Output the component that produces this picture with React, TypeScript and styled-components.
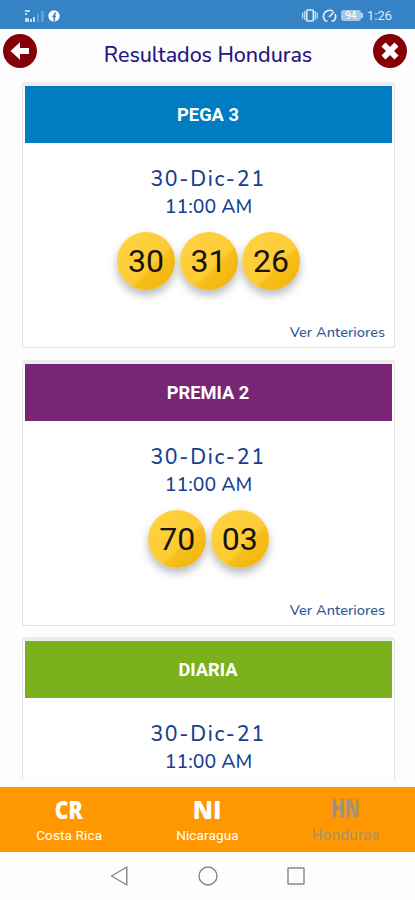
import React from 'react';
import styled, { createGlobalStyle } from 'styled-components';

const GlobalStyle = createGlobalStyle`
  *, *::before, *::after { box-sizing: border-box; }
  body { margin: 0; background: #fdfdfd; }
`;

const Screen = styled.div`
  width: 415px;
  height: 900px;
  display: flex;
  flex-direction: column;
  overflow: hidden;
  background: #fdfdfd;
  font-family: Roboto, sans-serif;
`;

const StatusBar = styled.div`
  height: 29px;
  flex: none;
  display: flex;
  align-items: center;
  justify-content: space-between;
  padding: 2px 23px 0 25px;
  background: #3583c5;
  color: #dcebf8;
`;

const StatusGroup = styled.div<{ $gap: number }>`
  display: flex;
  align-items: center;
  gap: ${p => p.$gap}px;
`;

const Battery = styled.span`
  width: 20px;
  height: 11px;
  border-radius: 3px;
  background: #a5c8e6;
  color: #fff;
  font-size: 10px;
  line-height: 11px;
  text-align: center;
  position: relative;

  &::after {
    content: '';
    position: absolute;
    right: -2px;
    top: 3px;
    width: 2px;
    height: 5px;
    background: #b9d5ee;
  }
`;

const Clock = styled.span`
  margin-left: 2px;
  font-size: 13.5px;
  line-height: 15px;
  letter-spacing: -0.2px;
`;

const Header = styled.header`
  height: 53px;
  flex: none;
  display: flex;
  justify-content: space-between;
  padding: 5px 8px 0 3px;
`;

const Title = styled.h1`
  margin: 0;
  padding: 6px 0 0 6px;
  font: 500 21.5px/30px Nunito, 'Open Sans', sans-serif;
  letter-spacing: -0.06px;
  white-space: nowrap;
  color: #241582;
`;

const RoundButton = styled.button`
  width: 34px;
  height: 34px;
  padding: 0;
  border: 0;
  border-radius: 50%;
  background: #850006;
  display: block;

  svg { display: block; }
`;

const Results = styled.main`
  height: 698px;
  flex: none;
  padding: 0 20px 0 22px;
  display: flex;
  flex-direction: column;
  gap: 11.7px;
  overflow: hidden;
`;

const Card = styled.section`
  height: 266px;
  flex: none;
  border: 1.5px solid #e3e3e5;
  border-top: 4px solid #ececee;
  border-radius: 3px;
  padding: 0 2px;
  background: #fff;
  display: flex;
  flex-direction: column;
  align-items: center;
`;

const Banner = styled.h2<{ $color: string }>`
  align-self: stretch;
  height: 57px;
  flex: none;
  margin: 0;
  padding-right: 1px;
  background: ${p => p.$color};
  color: #fff;
  font: 700 18.3px/57px Roboto, sans-serif;
  text-align: center;
`;

const DateText = styled.div`
  margin: 22px 1px 0 0;
  font: 500 21.3px/28px Nunito, 'Open Sans', sans-serif;
  letter-spacing: 1.7px;
  color: #173f91;
`;

const TimeText = styled.div`
  font: 500 19.5px/28px Nunito, 'Open Sans', sans-serif;
  color: #173f91;
`;

const Balls = styled.div`
  display: flex;
  gap: 4.5px;
  margin-top: 11px;
`;

const Ball = styled.span`
  width: 58px;
  height: 58px;
  border-radius: 50%;
  background: linear-gradient(135deg, #ffd342 0%, #fdcb35 58%, #f7bf1d 62%, #efb000 100%);
  box-shadow: 0 5px 8px rgba(70, 70, 80, 0.38);
  color: #15130c;
  font-size: 32px;
  line-height: 59px;
  text-align: center;
`;

const PreviousLink = styled.a`
  align-self: flex-end;
  margin: 31px 7px 0 0;
  font: 500 14.6px/22px Nunito, 'Open Sans', sans-serif;
  color: #2c5797;
`;

const CountryBar = styled.nav`
  height: 65px;
  flex: none;
  margin-top: 7px;
  display: grid;
  grid-template-columns: repeat(3, 1fr);
  background: #ff9800;
`;

const CountryTab = styled.button<{ $active?: boolean }>`
  padding: ${p => (p.$active ? '3px' : '5px')} 0 0;
  border: 0;
  background: none;
  font-family: Roboto, sans-serif;
  color: ${p => (p.$active ? '#a39375' : '#fff')};
  display: flex;
  flex-direction: column;
  align-items: center;
  gap: ${p => (p.$active ? '2px' : '0')};
`;

const CountryCode = styled.span<{ $stretch: number }>`
  font: 800 25.5px/34px 'Open Sans', sans-serif;
  transform: scaleX(${p => p.$stretch});
`;

const CountryName = styled.span<{ $size: number; $spacing: number }>`
  font-size: ${p => p.$size}px;
  line-height: 18px;
  letter-spacing: ${p => p.$spacing}px;
`;

const SystemNav = styled.div`
  flex: 1;
  display: flex;
  align-items: center;
  justify-content: center;
  gap: 68px;

  svg { display: block; }
`;

const draws = [
  { name: 'PEGA 3', color: '#007dc2', numbers: ['30', '31', '26'] },
  { name: 'PREMIA 2', color: '#782575', numbers: ['70', '03'] },
  { name: 'DIARIA', color: '#7bb11c', numbers: [] },
];

const countries = [
  { code: 'CR', name: 'Costa Rica', stretch: 0.83, size: 13.6, spacing: 0.1 },
  { code: 'NI', name: 'Nicaragua', stretch: 0.95, size: 13.6, spacing: 0.1 },
  { code: 'HN', name: 'Honduras', stretch: 0.7, size: 14.8, spacing: 0.5, active: true },
];

const SignalIcon = () => (
  <svg width="20" height="14" viewBox="0 0 20 14" fill="currentColor">
    <path d="M0 1h5v2H0zM0 4h2v2H0zM0 9h4v4H0zM5 10h2v3H5zM8 8h2v5H8z" opacity=".85" />
    <path d="M12 5h2v8h-2zM16 2h3v11h-3z" opacity=".28" />
  </svg>
);

const SocialIcon = () => (
  <svg width="12" height="12" viewBox="0 0 12 12">
    <circle cx="6" cy="6" r="5.7" fill="#fff" />
    <path d="M6.3 11.5V4.7Q6.3 3 8.2 3M4.3 6.4h3.6" stroke="#3583c5" strokeWidth="1.6" fill="none" />
  </svg>
);

const VibrateIcon = () => (
  <svg width="16" height="13" viewBox="0 0 16 13" fill="none" stroke="currentColor" strokeWidth="1.6">
    <rect x="4.7" y="1" width="6.6" height="11" rx="1" />
    <path d="M.8 3.5v6M2.8 2v9M13.2 2v9M15.2 3.5v6" strokeWidth="1.1" />
  </svg>
);

const GaugeIcon = () => (
  <svg width="15" height="14" viewBox="0 0 15 14" fill="none" stroke="currentColor" strokeWidth="1.7">
    <path d="M4 12.2A6 6 0 1 1 11 2.4M13.1 5A6 6 0 0 1 11 12.2M3.5 12h2M9.5 12h2M7 8l5-5" />
  </svg>
);

const BackArrow = () => (
  <svg width="34" height="34" viewBox="0 0 34 34">
    <path d="M7.5 17 17 8.2V14h9v6h-9v5.8Z" fill="#fff" />
  </svg>
);

const CrossMark = () => (
  <svg width="34" height="34" viewBox="0 0 34 34">
    <path d="m10.5 10.5 13 13m0-13-13 13" stroke="#fff" strokeWidth="5.7" />
  </svg>
);

export default function App() {
  return (
    <>
      <GlobalStyle />
      <Screen>
        <StatusBar>
          <StatusGroup $gap={3}>
            <SignalIcon />
            <SocialIcon />
          </StatusGroup>
          <StatusGroup $gap={4}>
            <VibrateIcon />
            <GaugeIcon />
            <Battery>94</Battery>
            <Clock>1:26</Clock>
          </StatusGroup>
        </StatusBar>
        <Header>
          <RoundButton aria-label="Volver"><BackArrow /></RoundButton>
          <Title>Resultados Honduras</Title>
          <RoundButton aria-label="Cerrar"><CrossMark /></RoundButton>
        </Header>
        <Results>
          {draws.map(draw => (
            <Card key={draw.name}>
              <Banner $color={draw.color}>{draw.name}</Banner>
              <DateText>30-Dic-21</DateText>
              <TimeText>11:00 AM</TimeText>
              {draw.numbers.length > 0 && (
                <>
                  <Balls>
                    {draw.numbers.map(n => <Ball key={n}>{n}</Ball>)}
                  </Balls>
                  <PreviousLink>Ver Anteriores</PreviousLink>
                </>
              )}
            </Card>
          ))}
        </Results>
        <CountryBar>
          {countries.map(c => (
            <CountryTab key={c.code} $active={c.active}>
              <CountryCode $stretch={c.stretch}>{c.code}</CountryCode>
              <CountryName $size={c.size} $spacing={c.spacing}>{c.name}</CountryName>
            </CountryTab>
          ))}
        </CountryBar>
        <SystemNav>
          <svg width="20" height="20" viewBox="0 0 20 20" fill="none" stroke="#858585" strokeWidth="1.4">
            <path d="M16.8 1v18L1.5 10Z" strokeLinejoin="round" />
          </svg>
          <svg width="20" height="20" viewBox="0 0 20 20" fill="none" stroke="#858585" strokeWidth="1.4">
            <circle cx="10" cy="10" r="9" />
          </svg>
          <svg width="20" height="20" viewBox="0 0 20 20" fill="none" stroke="#858585" strokeWidth="1.4">
            <rect x="2" y="2" width="16" height="16" rx=".5" />
          </svg>
        </SystemNav>
      </Screen>
    </>
  );
}
